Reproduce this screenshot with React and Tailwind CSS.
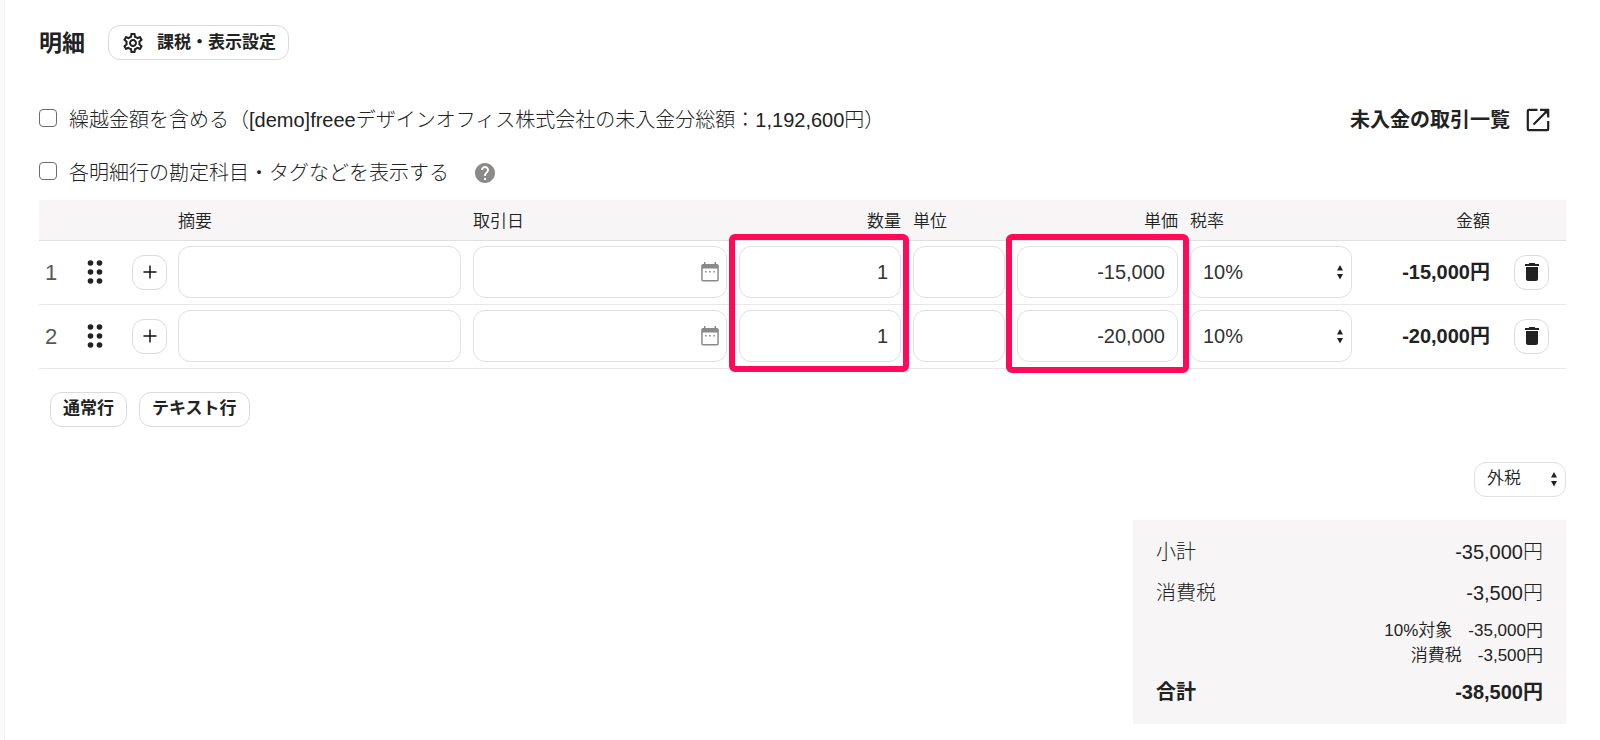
import { useState } from "react";
import { MdDelete, MdHelp, MdOutlineSettings } from "react-icons/md";

const yen = (value) => `${value.toLocaleString("en-US")}円`;

const initialRows = [
  { id: 1, quantity: "1", price: "-15,000", amount: -15000 },
  { id: 2, quantity: "1", price: "-20,000", amount: -20000 },
];

const fieldClass =
  "block h-[52px] w-full rounded-xl border border-[#e1dfdf] bg-white text-xl text-[#323232] focus:outline-none focus:ring-2 focus:ring-blue-400";

const smallButtonClass =
  "flex h-[35px] items-center justify-center rounded-xl border border-[#dcdada] bg-white text-[#222222]";

const checkboxClass =
  "mt-[5px] h-[18px] w-[18px] appearance-none rounded-sm border border-[#6e6b6b] checked:bg-[#6e6b6b]";

const SortArrows = () => (
  <svg
    viewBox="0 0 6 16"
    className="pointer-events-none absolute top-1/2 right-[9px] h-4 w-[6px] -translate-y-1/2 fill-[#222222]"
  >
    <path d="M3 1 L6 6.500 H0 Z M0 10 H6 L3 15.500 Z" />
  </svg>
);

const CalendarIcon = () => (
  <svg
    viewBox="0 0 18 20"
    className="pointer-events-none absolute top-1/2 right-2 h-5 w-[18px] -translate-y-1/2 fill-[#8c8989]"
  >
    <path
      d="M3 0h1.500v2h9V0H15v2h1a1.800 1.800 0 0 1 1.800 1.800v13.900a1.800 1.800 0 0 1-1.800 1.800H2a1.800 1.800 0 0 1-1.800-1.800V3.800A1.800 1.800 0 0 1 2 2h1z M1.700 6.500v11a.6.6 0 0 0 .6.6h13.400a.6.6 0 0 0 .6-.6v-11z"
      fillRule="evenodd"
    />
    <path d="M4 9h1.500v1.500H4z M8.200 9h1.500v1.500H8.200z M12.400 9h1.500v1.500h-1.500z" />
  </svg>
);

const DragIcon = () => (
  <svg viewBox="0 0 16 24" className="h-6 w-4 fill-[#222222]">
    {[3, 12, 21].map((y) => (
      <g key={y}>
        <circle cx="3.500" cy={y} r="2.800" />
        <circle cx="12.500" cy={y} r="2.800" />
      </g>
    ))}
  </svg>
);

const PlusIcon = () => (
  <svg
    viewBox="0 0 14 14"
    className="h-[14px] w-[14px]"
    stroke="#111111"
    strokeWidth="1.500"
  >
    <path d="M7 0.500v13M0.500 7h13" />
  </svg>
);

const OpenIcon = () => (
  <svg
    viewBox="0 0 24 24"
    className="h-6 w-6"
    fill="none"
    stroke="#222222"
    strokeWidth="2.200"
  >
    <path d="M11.500 1.800H3a1.200 1.200 0 0 0-1.200 1.200v18a1.200 1.200 0 0 0 1.200 1.200h18a1.200 1.200 0 0 0 1.200-1.200v-8" />
    <path d="M14 1.800h8.200v7.700 M22 2L7.500 16.500" />
    <path d="M17 2h5v5z" fill="#222222" stroke="none" />
  </svg>
);

const Row = ({ row, onChange }) => (
  <tr className="h-16 border-b border-[#e9e7e7]">
    <td className="pl-[6px] text-[22px] text-[#595757]">{row.id}</td>
    <td className="pl-2">
      <DragIcon />
    </td>
    <td>
      <button
        type="button"
        aria-label="行を追加"
        className={`${smallButtonClass} w-[35px]`}
      >
        <PlusIcon />
      </button>
    </td>
    <td className="pr-3">
      <input type="text" aria-label="摘要" className={`${fieldClass} px-3`} />
    </td>
    <td className="pr-3">
      <div className="relative">
        <input type="text" aria-label="取引日" className={`${fieldClass} px-3`} />
        <CalendarIcon />
      </div>
    </td>
    <td className="pr-3">
      <input
        type="text"
        aria-label="数量"
        value={row.quantity}
        onChange={(e) => onChange(row.id, "quantity", e.target.value)}
        className={`${fieldClass} px-3 text-right`}
      />
    </td>
    <td className="pr-3">
      <input type="text" aria-label="単位" className={`${fieldClass} px-3`} />
    </td>
    <td className="pr-3">
      <input
        type="text"
        aria-label="単価"
        value={row.price}
        onChange={(e) => onChange(row.id, "price", e.target.value)}
        className={`${fieldClass} px-3 text-right`}
      />
    </td>
    <td>
      <div className="relative">
        <select aria-label="税率" className={`${fieldClass} appearance-none px-3`}>
          <option>10%</option>
          <option>8%</option>
        </select>
        <SortArrows />
      </div>
    </td>
    <td className="text-right text-xl font-bold">{yen(row.amount)}</td>
    <td className="pl-6">
      <button
        type="button"
        aria-label="行を削除"
        className={`${smallButtonClass} w-[35px]`}
      >
        <MdDelete className="h-6 w-6" />
      </button>
    </td>
  </tr>
);

const App = () => {
  const [rows, setRows] = useState(initialRows);

  const handleChange = (id, name, value) => {
    setRows((prev) =>
      prev.map((row) => (row.id === id ? { ...row, [name]: value } : row))
    );
  };

  const subtotal = rows.reduce((sum, row) => sum + row.amount, 0);
  const tax = subtotal / 10;

  return (
    <div className="min-h-screen border-l-4 border-[#fafafa] bg-white font-['Liberation_Sans','Noto_Sans_CJK_JP',sans-serif] text-[#222222]">
      <main className="border-l border-[#f3f3f3] pt-[25px] pr-[34px] pb-4 pl-[34px]">
        <div className="flex items-center gap-[23px]">
          <h2 className="text-[23px] leading-8 font-bold">明細</h2>
          <button
            type="button"
            className="flex h-[35px] items-center gap-3 rounded-xl border border-[#dcdada] px-3 text-[17px] font-bold"
          >
            <MdOutlineSettings className="h-6 w-6" />
            課税・表示設定
          </button>
        </div>

        <div className="mt-11 flex items-center justify-between">
          <label className="flex items-start gap-3 text-xl leading-8 font-light">
            <input type="checkbox" className={checkboxClass} />
            繰越金額を含める（[demo]freeeデザインオフィス株式会社の未入金分総額：1,192,600円）
          </label>
          <a href="#unpaid" className="mr-4 flex items-center gap-4 text-xl font-bold">
            未入金の取引一覧
            <OpenIcon />
          </a>
        </div>

        <div className="mt-[21px] flex items-center gap-6">
          <label className="flex items-start gap-3 text-xl leading-8 font-light">
            <input type="checkbox" className={checkboxClass} />
            各明細行の勘定科目・タグなどを表示する
          </label>
          <MdHelp className="h-6 w-6 text-[#8c8989]" />
        </div>

        <div className="relative mt-[11px]">
          <table className="w-full table-fixed">
            <colgroup>
              <col className="w-[40px]" />
              <col className="w-[53px]" />
              <col className="w-[46px]" />
              <col />
              <col className="w-[266px]" />
              <col className="w-[174px]" />
              <col className="w-[104px]" />
              <col className="w-[173px]" />
              <col className="w-[162px]" />
              <col className="w-[138px]" />
              <col className="w-[76px]" />
            </colgroup>
            <thead>
              <tr className="h-10 border-b border-[#e1dfdf] bg-[#f7f5f6] text-[17px] *:p-0 *:pt-[3px] *:font-[350]">
                <th colSpan={3} />
                <th className="text-left">摘要</th>
                <th className="text-left">取引日</th>
                <th className="text-right">
                  <div className="pr-3">数量</div>
                </th>
                <th className="text-left">単位</th>
                <th className="text-right">
                  <div className="pr-3">単価</div>
                </th>
                <th className="text-left">税率</th>
                <th className="text-right">金額</th>
                <th />
              </tr>
            </thead>
            <tbody>
              {rows.map((row) => (
                <Row key={row.id} row={row} onChange={handleChange} />
              ))}
            </tbody>
          </table>
          {/* frames around the quantity and unit price columns */}
          <div className="pointer-events-none absolute top-[34px] right-[657px] -bottom-[3px] w-[180px] rounded-md border-[6px] border-[#ff0a5b]" />
          <div className="pointer-events-none absolute top-[34px] right-[377px] -bottom-1 w-[183px] rounded-md border-[6px] border-[#ff0a5b]" />
        </div>

        <div className="mt-[23px] flex gap-3 pl-[11px]">
          <button type="button" className={`${smallButtonClass} px-3 text-[17px] font-bold`}>
            通常行
          </button>
          <button type="button" className={`${smallButtonClass} px-3 text-[17px] font-bold`}>
            テキスト行
          </button>
        </div>

        <div className="mt-[35px] flex justify-end">
          <div className="relative">
            <select
              aria-label="税区分"
              className="h-[35px] w-[92px] appearance-none rounded-xl border border-[#e1dfdf] px-3 text-[17px] font-[350]"
            >
              <option>外税</option>
              <option>内税</option>
            </select>
            <SortArrows />
          </div>
        </div>

        <dl className="mt-[23px] ml-auto w-[433px] bg-[#f7f5f6] px-[23px] pt-3 pb-2 text-xl font-light">
          <div className="flex h-[41px] items-center justify-between">
            <dt>小計</dt>
            <dd>{yen(subtotal)}</dd>
          </div>
          <div className="flex h-[41px] items-center justify-between">
            <dt>消費税</dt>
            <dd>{yen(tax)}</dd>
          </div>
          <div className="mt-1 flex justify-end gap-4 text-[17px] leading-[25px] font-[350]">
            <dt>10%対象</dt>
            <dd>{yen(subtotal)}</dd>
          </div>
          <div className="flex justify-end gap-4 text-[17px] leading-[25px] font-[350]">
            <dt>消費税</dt>
            <dd>{yen(tax)}</dd>
          </div>
          <div className="flex h-12 items-center justify-between font-bold">
            <dt>合計</dt>
            <dd>{yen(subtotal + tax)}</dd>
          </div>
        </dl>
      </main>
    </div>
  );
};

export default App;
